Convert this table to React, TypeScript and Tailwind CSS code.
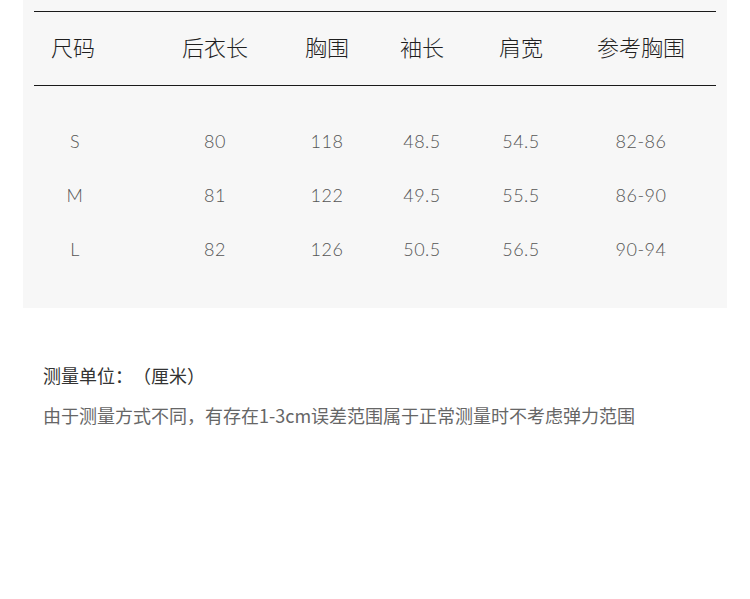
const headers = ['尺码', '后衣长', '胸围', '袖长', '肩宽', '参考胸围']

const rows = [
  ['S', '80', '118', '48.5', '54.5', '82-86'],
  ['M', '81', '122', '49.5', '55.5', '86-90'],
  ['L', '82', '126', '50.5', '56.5', '90-94'],
]

// fixed column boxes so each column centre lines up with the picture
const cols = [
  'w-[82px]',
  'ml-[54px] w-[90px]',
  'ml-[22px] w-[90px]',
  'ml-[5px] w-[90px]',
  'ml-[9px] w-[90px]',
  'ml-[30px] w-[90px]',
]

export default function App() {
  return (
    <div className="w-[750px] h-[599px] bg-white font-['Noto_Sans_CJK_SC',sans-serif] [text-spacing-trim:space-all]">
      <div className="mx-[23px] bg-[#f7f7f7] px-[11px] pt-[11px] pb-[32px]">
        <div className="border-t border-b border-[#1a1a1a] h-[75px] flex items-center">
          {headers.map((h, i) => (
            <div
              key={h}
              className={`${cols[i]} ${i === 0 ? 'text-left pl-[17px]' : 'text-center'} text-[22px] leading-none font-light text-[#1f1f1f] -mt-[5px]`}
            >
              {h}
            </div>
          ))}
        </div>

        <div className="pt-[28px]">
          {rows.map((r) => (
            <div key={r[0]} className="h-[54px] flex items-center">
              {r.map((v, i) => (
                <div
                  key={i}
                  className={`${cols[i]} text-center font-['Lato',sans-serif] font-light text-[18px] text-[#555] tracking-[0.5px]`}
                >
                  {v}
                </div>
              ))}
            </div>
          ))}
        </div>
      </div>

      <div className="pl-[43px] pt-[55px]">
        <p className="text-[18px] leading-[24px] text-[#333]">测量单位：（厘米）</p>
        <p className="mt-[16px] text-[18px] leading-[24px] text-[#666]">
          由于测量方式不同，有存在1-3cm误差范围属于正常测量时不考虑弹力范围
        </p>
      </div>
    </div>
  )
}
